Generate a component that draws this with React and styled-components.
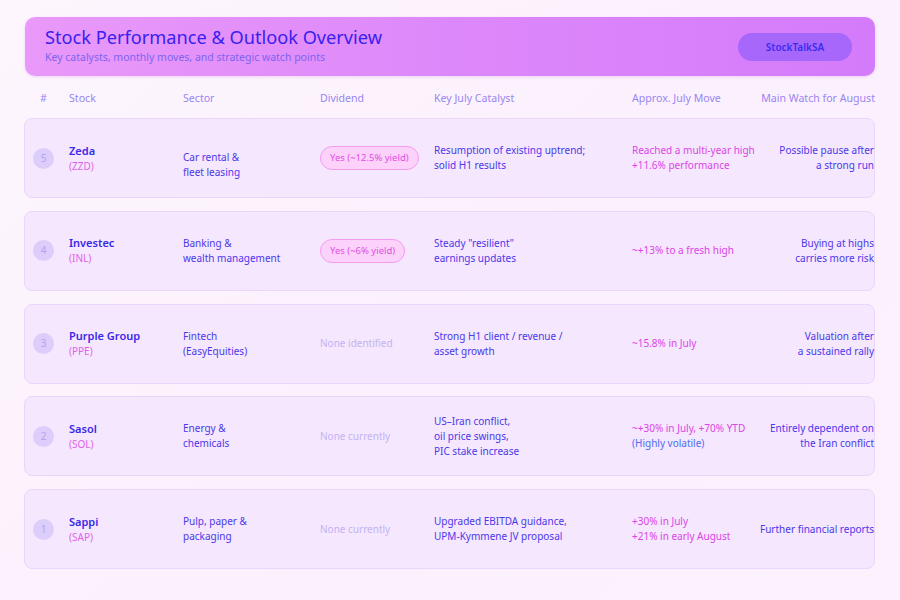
import React from "react";
import styled, { createGlobalStyle } from "styled-components";

const GlobalStyle = createGlobalStyle`
    html, body {
        margin: 0;
        padding: 0;
        background: #fcf3fd;
        font-family: "Noto Sans", "Open Sans", sans-serif;
    }
`;

const Page = styled.div`
    width: 900px;
    height: 600px;
    box-sizing: border-box;
    padding: 17px 25px 0 24px;
    background: linear-gradient(135deg, #fdf6fd 0%, #fbf0fd 60%, #fcf2fd 100%);
    overflow: hidden;
`;

const Banner = styled.header`
    height: 59px;
    box-sizing: border-box;
    margin-left: 1px;
    padding: 0 23px 0 20px;
    border-radius: 10px;
    background: linear-gradient(90deg, #e999f9 0%, #dd88fa 50%, #d47bfb 100%);
    box-shadow: 0 1px 3px rgba(190, 110, 230, 0.25);
    display: flex;
    align-items: center;
    justify-content: space-between;
`;

const TitleBlock = styled.div`
    display: flex;
    flex-direction: column;
    margin-top: -5px;
`;

const Title = styled.h1`
    margin: 0;
    font-size: 18.2px;
    font-weight: 400;
    line-height: 26px;
    color: #3a20f0;
`;

const Subtitle = styled.p`
    margin: 0;
    font-size: 10.5px;
    line-height: 14px;
    color: #7c64f2;
`;

const Badge = styled.span`
    width: 114px;
    height: 28px;
    border-radius: 14px;
    background: #a867fb;
    color: #3b2cf0;
    font-size: 10px;
    font-weight: 600;
    display: flex;
    align-items: center;
    justify-content: center;
`;

const Grid = styled.div`
    display: grid;
    grid-template-columns: 36px 114px 137px 114px 198px 128px 1fr;
    align-items: center;
`;

const HeadRow = styled(Grid)`
    padding: 14px 0 0 9px;
    height: 16px;
    margin-bottom: 12px;
    font-size: 10.6px;
    color: #9886f0;
`;

const HeadCell = styled.div`
    text-align: ${(p) => (p.$right ? "right" : "left")};
    white-space: nowrap;
`;

const Hash = styled.div`
    width: 21px;
    text-align: center;
`;

const List = styled.div`
    display: flex;
    flex-direction: column;
    gap: 12.75px;
`;

const Card = styled(Grid)`
    min-height: 80px;
    box-sizing: border-box;
    padding-left: 8px;
    border: 1px solid #ead5fb;
    border-radius: 8px;
    background: #f5e7fd;
    font-size: 10px;
    line-height: 15px;
    color: #4a38ea;
`;

const Rank = styled.div`
    width: 21px;
    height: 21px;
    border-radius: 50%;
    background: #ddcdfa;
    color: #b3a3f2;
    font-size: 10px;
    display: flex;
    align-items: center;
    justify-content: center;
`;

const Stack = styled.div`
    display: flex;
    flex-direction: column;
    margin-top: ${(p) => p.$drop || 0}px;
`;

const Name = styled.span`
    font-size: 11px;
    font-weight: 600;
    line-height: 16px;
    color: #3a28ea;
`;

const Ticker = styled.span`
    font-size: 10px;
    line-height: 15px;
    color: #e064ea;
`;

const Pill = styled.span`
    display: inline-block;
    padding: 4px 9px;
    border: 1px solid #f49cf2;
    border-radius: 12px;
    background: #fcd2fb;
    color: #e04fe2;
    font-size: 9.5px;
    line-height: 14px;
    white-space: nowrap;
`;

const Muted = styled.span`
    color: #c3b3f3;
`;

const Move = styled.span`
    color: ${(p) => (p.$note ? "#4d6ef2" : "#dc45e6")};
    white-space: nowrap;
`;

const Watch = styled.div`
    text-align: right;
    white-space: nowrap;
`;

const rows = [
    {
        rank: 5,
        name: "Zeda",
        ticker: "ZZD",
        sector: ["Car rental &", "fleet leasing"],
        drop: 14,
        dividend: "Yes (~12.5% yield)",
        catalyst: ["Resumption of existing uptrend;", "solid H1 results"],
        move: ["Reached a multi-year high", "+11.6% performance"],
        watch: ["Possible pause after", "a strong run"],
    },
    {
        rank: 4,
        name: "Investec",
        ticker: "INL",
        sector: ["Banking &", "wealth management"],
        dividend: "Yes (~6% yield)",
        catalyst: ["Steady \"resilient\"", "earnings updates"],
        move: ["~+13% to a fresh high"],
        watch: ["Buying at highs", "carries more risk"],
    },
    {
        rank: 3,
        name: "Purple Group",
        ticker: "PPE",
        sector: ["Fintech", "(EasyEquities)"],
        none: "None identified",
        catalyst: ["Strong H1 client / revenue /", "asset growth"],
        move: ["~15.8% in July"],
        watch: ["Valuation after", "a sustained rally"],
    },
    {
        rank: 2,
        name: "Sasol",
        ticker: "SOL",
        sector: ["Energy &", "chemicals"],
        none: "None currently",
        catalyst: ["US–Iran conflict,", "oil price swings,", "PIC stake increase"],
        move: ["~+30% in July, +70% YTD"],
        note: "(Highly volatile)",
        watch: ["Entirely dependent on", "the Iran conflict"],
    },
    {
        rank: 1,
        name: "Sappi",
        ticker: "SAP",
        sector: ["Pulp, paper &", "packaging"],
        none: "None currently",
        catalyst: ["Upgraded EBITDA guidance,", "UPM-Kymmene JV proposal"],
        move: ["+30% in July", "+21% in early August"],
        watch: ["Further financial reports"],
    },
];

const Lines = ({ items, drop }) => (
    <Stack $drop={drop}>
        {items.map((t) => (
            <span key={t}>{t}</span>
        ))}
    </Stack>
);

const App = () => (
    <>
        <GlobalStyle />
        <Page>
            <Banner>
                <TitleBlock>
                    <Title>Stock Performance &amp; Outlook Overview</Title>
                    <Subtitle>Key catalysts, monthly moves, and strategic watch points</Subtitle>
                </TitleBlock>
                <Badge>StockTalkSA</Badge>
            </Banner>
            <HeadRow>
                <Hash>#</Hash>
                <HeadCell>Stock</HeadCell>
                <HeadCell>Sector</HeadCell>
                <HeadCell>Dividend</HeadCell>
                <HeadCell>Key July Catalyst</HeadCell>
                <HeadCell>Approx. July Move</HeadCell>
                <HeadCell $right>Main Watch for August</HeadCell>
            </HeadRow>
            <List>
                {rows.map((r) => (
                    <Card key={r.rank}>
                        <Rank>{r.rank}</Rank>
                        <Stack>
                            <Name>{r.name}</Name>
                            <Ticker>({r.ticker})</Ticker>
                        </Stack>
                        <Lines items={r.sector} drop={r.drop} />
                        <div>{r.dividend ? <Pill>{r.dividend}</Pill> : <Muted>{r.none}</Muted>}</div>
                        <Lines items={r.catalyst} />
                        <Stack>
                            {r.move.map((m) => (
                                <Move key={m}>{m}</Move>
                            ))}
                            {r.note && <Move $note>{r.note}</Move>}
                        </Stack>
                        <Watch>
                            {r.watch.map((w) => (
                                <div key={w}>{w}</div>
                            ))}
                        </Watch>
                    </Card>
                ))}
            </List>
        </Page>
    </>
);

export default App;
